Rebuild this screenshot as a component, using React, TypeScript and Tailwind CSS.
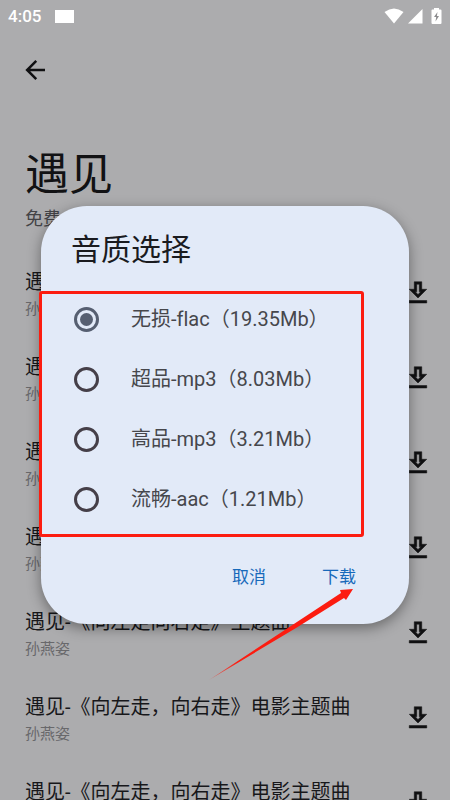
import { useState } from 'react';

const songs = [
  { id: 1, title: '遇见', artist: '孙燕姿' },
  { id: 2, title: '遇见', artist: '孙燕姿' },
  { id: 3, title: '遇见', artist: '孙燕姿' },
  { id: 4, title: '遇见', artist: '孙燕姿' },
  { id: 5, title: '遇见-《向左走向右走》主题曲', artist: '孙燕姿' },
  { id: 6, title: '遇见-《向左走，向右走》电影主题曲', artist: '孙燕姿' },
  { id: 7, title: '遇见-《向左走，向右走》电影主题曲', artist: '孙燕姿' },
];

const qualities = [
  { value: 'flac', label: '无损-flac（19.35Mb）' },
  { value: 'mp3-high', label: '超品-mp3（8.03Mb）' },
  { value: 'mp3', label: '高品-mp3（3.21Mb）' },
  { value: 'aac', label: '流畅-aac（1.21Mb）' },
];

function StatusBar() {
  return (
    <div className="flex h-8 items-center justify-between px-2 text-white">
      <div className="flex items-center gap-[14px]">
        <span className="text-[17px] font-medium leading-8">4:05</span>
        <span className="h-[13px] w-[19px] bg-white" />
      </div>
      <div className="flex items-center">
        <svg width="20" height="16" viewBox="0 0 20 16" fill="currentColor"><path d="M0.5 4 Q10 -3 19.5 4 L10 15.5 Z" /></svg>
        <svg className="ml-1" width="15" height="16" viewBox="0 0 15 16" fill="currentColor"><path d="M14.5 1 V15.5 H0 Z" /></svg>
        <svg className="ml-2" width="11" height="18" viewBox="0 0 11 18">
          <path d="M3 1h5v1.5h1.5q1 0 1 1V16q0 1-1 1h-8q-1 0-1-1V3.5q0-1 1-1H3z" fill="currentColor" />
          <path d="M6.5 5 3 10h2.2L4.5 14.5 8 9H5.900z" fill="#8d8d8f" />
        </svg>
      </div>
    </div>
  );
}

function SongRow({ title, artist }: { title: string; artist: string }) {
  return (
    <li className="flex h-[85px] items-center justify-between pl-[25px] pr-[17px]">
      <div>
        <p className="whitespace-nowrap text-[20px] leading-8 text-[#17171a]">{title}</p>
        <p className="text-[15px] leading-[22px] text-[#68686b]">{artist}</p>
      </div>
      <button aria-label="下载歌曲" className="shrink-0 text-[#101012]">
        <svg className="block" width="30" height="30" viewBox="0 0 24 24" fill="currentColor" stroke="currentColor" strokeWidth="0.4">
          <path d="M13 5v6h1.170L12 13.170 9.830 11H11V5h2m2-2H9v6H5l7 7 7-7h-4V3zm4 15H5v2h14v-2z" />
        </svg>
      </button>
    </li>
  );
}

function QualityDialog() {
  const [quality, setQuality] = useState('flac');

  return (
    <div className="absolute inset-0 flex items-center justify-center px-[41px] pt-[30px]">
      <div role="dialog" aria-labelledby="quality-title" className="relative w-full max-w-md rounded-[46px] bg-[#e2eaf8] px-[30px] pb-[21px] pt-[26px] shadow-[0_4px_14px_rgba(0,0,0,0.4)]">
        <h2 id="quality-title" className="text-[30px] leading-9 text-[#1a1b1f]">音质选择</h2>
        <div className="mt-[21px]">
          {qualities.map(q => (
            <label key={q.value} className="flex h-[60px] items-center gap-8 pl-[3px] text-[20px] text-[#46474c] [font-variant-ligatures:none]">
              <input
                type="radio"
                name="quality"
                value={q.value}
                checked={quality === q.value}
                onChange={() => setQuality(q.value)}
                className="grid size-[25px] shrink-0 appearance-none place-items-center rounded-full border-[3px] border-[#453f48] before:size-[13px] before:rounded-full checked:border-[#565f71] checked:before:bg-[#565f71]"
              />
              <span className="whitespace-nowrap">{q.label}</span>
            </label>
          ))}
        </div>
        <div className="mt-6 flex justify-end gap-[10px] text-[17px] text-[#1769ba]">
          <button className="h-[50px] px-[23px]">取消</button>
          <button className="h-[50px] px-[23px]">下载</button>
        </div>

        {/* highlight around the options */}
        <div className="pointer-events-none absolute -left-[2px] right-[45px] top-[85px] h-[246px] rounded-[3px] border-[3px] border-[#fc1c10]" />
        {/* arrow pointing at the download button */}
        <svg className="pointer-events-none absolute -bottom-[58px] right-[53px]" width="150" height="96" viewBox="0 0 150 96">
          <defs>
            <linearGradient id="arrow" x1="0" y1="1" x2="1" y2="0">
              <stop offset="0" stopColor="#fc1c10" stopOpacity="0.4" />
              <stop offset="0.2" stopColor="#fc1c10" />
            </linearGradient>
          </defs>
          <path d="M3 94 L135 7 L134 4 L147 3 L140 14 L138 12 L90 42 Z" fill="url(#arrow)" />
        </svg>
      </div>
    </div>
  );
}

export default function App() {
  return (
    <div className="relative h-screen overflow-hidden bg-[#acacae] font-['Roboto','Noto_Sans_CJK_SC',sans-serif]" lang="zh-CN">
      <StatusBar />
      <header className="pt-[23px]">
        <button aria-label="返回" className="ml-5 block text-[#101012]">
          <svg className="block" width="30" height="30" viewBox="0 0 24 24" fill="none" stroke="currentColor" strokeWidth="2">
            <path d="M20 12H6M13 4.700 5.700 12l7.300 7.300" />
          </svg>
        </button>
        <h1 className="mt-[60px] pl-[25px] text-[44px] leading-[60px] text-[#121214]">遇见</h1>
        <p className="mt-[2px] pl-[25px] text-[18px] leading-6 text-[#434346]">免费</p>
      </header>
      <ul className="mt-[19px]">
        {songs.map(s => <SongRow key={s.id} title={s.title} artist={s.artist} />)}
      </ul>
      <QualityDialog />
    </div>
  );
}
